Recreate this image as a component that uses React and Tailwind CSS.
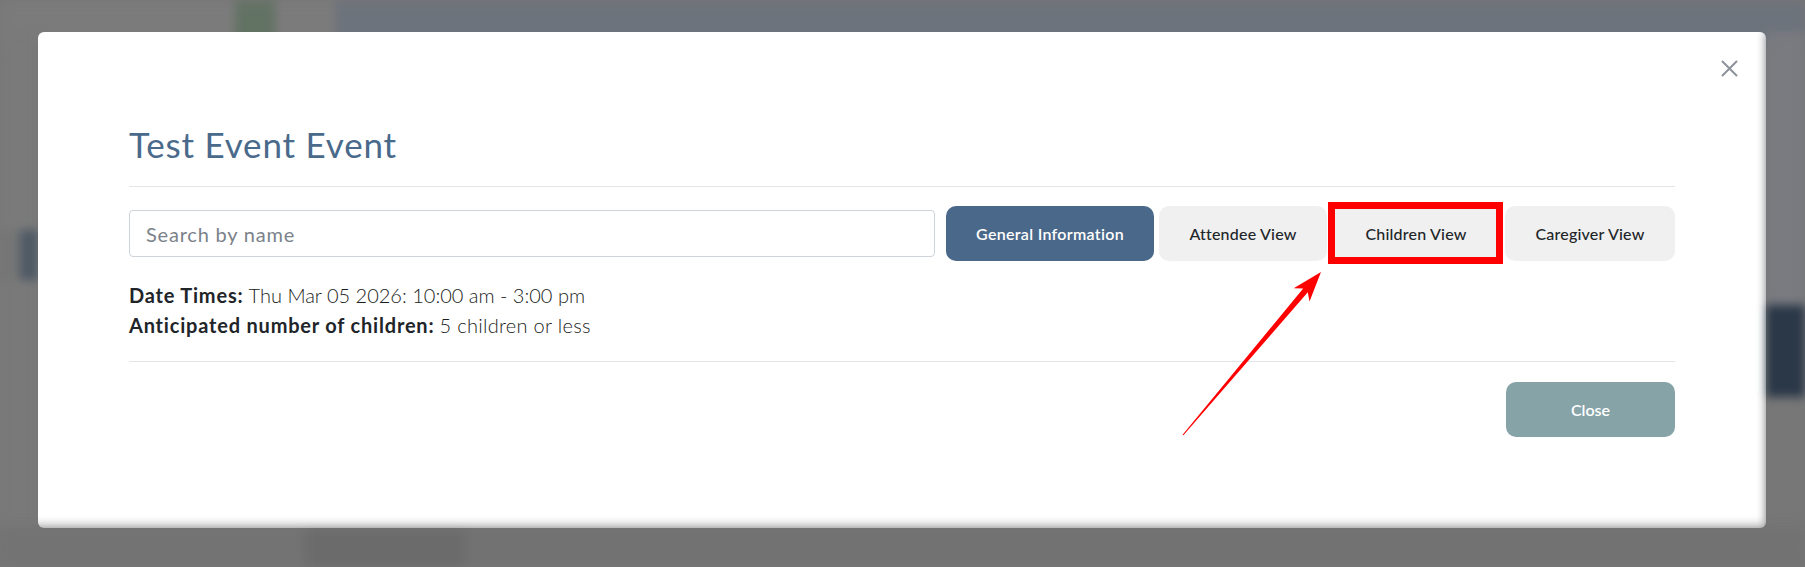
import React from "react";

function Arrow() {
  return (
    <svg
      className="absolute left-[1130px] top-[230px] pointer-events-none"
      width="170"
      height="190"
      viewBox="0 0 170 190"
    >
      <polygon
        points="15.4,173.3 139.8,30.2 141.5,39.5 153,10 125.7,26.3 135.2,26.4 14.6,172.7"
        fill="#ff0000"
      />
    </svg>
  );
}

function TopStrip() {
  return (
    <div className="flex h-[32px] blur-[5px] scale-y-[1.4] origin-top">
      <div className="w-[235px] bg-[#7b7b7b]" />
      <div className="w-[40px] bg-[#627263]" />
      <div className="w-[60px] bg-[#7b7b7b]" />
      <div className="flex-1 bg-[#6d737c]" />
    </div>
  );
}

function LeftGutter() {
  return (
    <div className="w-[38px] flex flex-col blur-[5px]">
      <div className="h-[198px] bg-[#7a7a7a]" />
      <div className="h-[50px] flex">
        <div className="w-[20px] bg-[#767676]" />
        <div className="flex-1 bg-[#4f5a66]" />
      </div>
      <div className="flex-1 bg-[#797979]" />
    </div>
  );
}

function RightGutter() {
  return (
    <div className="w-[39px] flex flex-col blur-[5px]">
      <div className="h-[273px] bg-[#797b80]" />
      <div className="h-[92px] bg-[#2b3848]" />
      <div className="flex-1 bg-[#777777]" />
    </div>
  );
}

function BottomStrip() {
  return (
    <div className="flex h-[39px] blur-[6px]">
      <div className="w-[305px] bg-[#737373]" />
      <div className="w-[160px] bg-[#6b6b6b]" />
      <div className="flex-1 bg-[#727272]" />
    </div>
  );
}

const tabBase = "h-[55px] rounded-[10px] text-[16px]";

export default function App() {
  const font = { fontFamily: "Lato, 'Noto Sans', sans-serif" };
  return (
    <div
      className="w-full h-[567px] overflow-hidden bg-[#767676] flex flex-col"
      style={font}
    >
      <TopStrip />
      <div className="flex h-[496px]">
        <LeftGutter />
        <div className="relative w-[1728px] h-[496px] bg-white rounded-[6px] px-[91px] pt-[91px]">
          <button className="absolute right-[28px] top-[28px] w-[17px] h-[17px] text-[#8d929b]">
            <svg width="17" height="17" viewBox="0 0 17 17">
              <path d="M1.5 1.5 L15.5 15.5 M15.5 1.5 L1.5 15.5" stroke="currentColor" strokeWidth="2" strokeLinecap="round" />
            </svg>
          </button>

          <h1 className="text-[35px] leading-[42px] tracking-[0.8px] text-[#4a6a8c] font-normal">
            Test Event Event
          </h1>
          <div className="mt-[21px] border-t border-[#e3e5e8]" />

          <div className="mt-[19px] flex items-center gap-[11px]">
            <div className="flex-1 h-[47px] border border-[#ced4da] rounded-[4px] flex items-center px-[16px]">
              <span className="text-[20px] tracking-[0.8px] text-[#7b828a]">Search by name</span>
            </div>
            <div className="flex items-center gap-[5px]">
              <button className={`${tabBase} w-[208px] bg-[#4a6889] text-white font-semibold tracking-[0.3px]`}>
                General Information
              </button>
              <button className={`${tabBase} w-[168px] bg-[#f0f0f0] text-[#212529] font-medium tracking-[0.2px]`}>
                Attendee View
              </button>
              <div className="relative">
                <button className={`${tabBase} w-[168px] bg-[#f0f0f0] text-[#212529] font-medium tracking-[0.2px]`}>
                  Children View
                </button>
                <div className="absolute left-[-4px] top-[-4px] right-[-3px] bottom-[-3px] border-[7px] border-[#ff0000] pointer-events-none" />
              </div>
              <button className={`${tabBase} w-[170px] bg-[#f0f0f0] text-[#212529] font-medium tracking-[0.2px]`}>
                Caregiver View
              </button>
            </div>
          </div>

          <div className="mt-[19px] text-[20px] leading-[30px] text-[#212529]">
            <div>
              <span className="font-bold tracking-[0.8px]">Date Times:</span>{" "}
              <span className="font-light text-[#1a1d21]">Thu Mar 05 2026: 10:00 am - 3:00 pm</span>
            </div>
            <div>
              <span className="font-bold tracking-[0.8px]">Anticipated number of children:</span>{" "}
              <span className="font-light text-[#1a1d21] tracking-[0.3px]">5 children or less</span>
            </div>
          </div>

          <div className="mt-[21px] border-t border-[#e3e5e8]" />

          <div className="mt-[20px] flex justify-end">
            <button className={`${tabBase} w-[169px] bg-[#86a3a8] text-white font-semibold`}>
              Close
            </button>
          </div>

          <Arrow />
        </div>
        <RightGutter />
      </div>
      <BottomStrip />
    </div>
  );
}
